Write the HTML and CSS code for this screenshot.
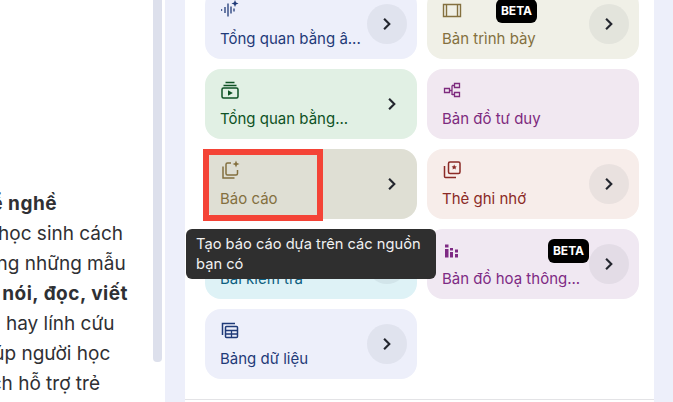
FILE: index.html
```html
<!DOCTYPE html>
<html lang="vi">
<head>
<meta charset="utf-8">
<title>Studio</title>
<link rel="stylesheet" href="styles.css">
</head>
<body>
<div class="page">
  <section class="source">
    <div class="prose">
      <p class="line l1">để <b>nghề</b></p>
      <p class="line l2">dạy học sinh cách</p>
      <p class="line l3">trong những mẫu</p>
      <p class="line l4"><b>nghe, nói, đọc, viết</b></p>
      <p class="line l5">viên hay lính cứu</p>
      <p class="line l6">giúp người học</p>
      <p class="line l7">cách hỗ trợ trẻ</p>
    </div>
    <div class="scrollbar"></div>
  </section>
  <main class="studio">
    <div class="grid">
      <div class="card indigo">
        <div class="info">
          <svg class="icon" viewBox="0 0 20 20"><path d="M1 10h1.200M5 7v6M8 3.500v13M11 6.500v7M14 8.500v3" fill="none" stroke="currentColor" stroke-width="1.300"/><path d="M15 0l1 2.500L18.500 3.500 16 4.500 15 7l-1-2.500L11.500 3.500 14 2.500z" fill="currentColor"/></svg>
          <span class="label">Tổng quan bằng â...</span>
        </div>
        <button class="go"><svg viewBox="0 0 12 12"><path d="M3.500 1.500 8 6l-4.500 4.500" /></svg></button>
      </div>
      <div class="card sand">
        <div class="info">
          <svg class="icon" viewBox="0 0 20 20"><path d="M1.500 4.500h17v12h-17zM4.500 4.500v12M15.500 4.500v12" fill="none" stroke="currentColor" stroke-width="1.400"/></svg>
          <span class="label">Bản trình bày</span>
        </div>
        <button class="go"><svg viewBox="0 0 12 12"><path d="M3.500 1.500 8 6l-4.500 4.500" /></svg></button>
        <span class="beta beta-top">BETA</span>
      </div>
      <div class="card green">
        <div class="info">
          <svg class="icon" viewBox="0 0 20 20"><path d="M5.500 2.500h9M3.500 5.500h13" fill="none" stroke="currentColor" stroke-width="1.400"/><rect x="2" y="8" width="16" height="10" rx="1.500" fill="none" stroke="currentColor" stroke-width="1.500"/><path d="M8 10.200v5.600l4.800-2.800z" fill="currentColor"/></svg>
          <span class="label">Tổng quan bằng...</span>
        </div>
        <button class="go plain"><svg viewBox="0 0 12 12"><path d="M3.500 1.500 8 6l-4.500 4.500" /></svg></button>
      </div>
      <div class="card plum">
        <div class="info">
          <svg class="icon" viewBox="0 0 20 20"><path d="M2.500 8.500h5v4h-5zM12.500 3.500h5v4h-5zM12.500 12.500h5v4h-5zM7.500 10.500h2.500M10 5.500v9.500M10 5.500h2.500M10 14.500h2.500" fill="none" stroke="currentColor" stroke-width="1.300"/></svg>
          <span class="label">Bản đồ tư duy</span>
        </div>
      </div>
      <div class="card report">
        <div class="info">
          <svg class="icon" viewBox="0 0 20 20"><path d="M3 6.500v11.500h11.500" fill="none" stroke="currentColor" stroke-width="1.500"/><path d="M11 3H7.500C6.700 3 6 3.700 6 4.500V13.500C6 14.300 6.700 15 7.500 15H16C16.800 15 17.500 14.300 17.500 13.500V10" fill="none" stroke="currentColor" stroke-width="1.500"/><path d="M16 .5l1 2.500 2.500 1-2.500 1-1 2.500-1-2.500-2.500-1 2.500-1z" fill="currentColor"/></svg>
          <span class="label">Báo cáo</span>
        </div>
        <button class="go plain"><svg viewBox="0 0 12 12"><path d="M3.500 1.500 8 6l-4.500 4.500" /></svg></button>
        <span class="highlight"></span>
      </div>
      <div class="card rose">
        <div class="info">
          <svg class="icon" viewBox="0 0 20 20"><rect x="6.500" y="2" width="11.500" height="11.500" rx="1.500" fill="none" stroke="currentColor" stroke-width="1.500"/><path d="M2.500 6v10.500c0 .6.400 1 1 1H14" fill="none" stroke="currentColor" stroke-width="1.500"/><path d="M12.200 4.500l.8 1.700 1.800.3-1.300 1.200.3 1.800-1.600-.9-1.600.9.300-1.800-1.300-1.200 1.800-.3z" fill="currentColor"/></svg>
          <span class="label">Thẻ ghi nhớ</span>
        </div>
        <button class="go"><svg viewBox="0 0 12 12"><path d="M3.500 1.500 8 6l-4.500 4.500" /></svg></button>
      </div>
      <div class="card cyan">
        <div class="info">
          <svg class="icon" viewBox="0 0 20 20"><circle cx="10" cy="10" r="7" fill="none" stroke="currentColor" stroke-width="1.500"/></svg>
          <span class="label">Bài kiểm tra</span>
        </div>
        <button class="go"><svg viewBox="0 0 12 12"><path d="M3.500 1.500 8 6l-4.500 4.500" /></svg></button>
      </div>
      <div class="card violet">
        <div class="info">
          <svg class="icon" viewBox="0 0 20 20"><path d="M3 4.500h3.500v3H3zM3 9h3.500v8.500H3zM8 8h3v2.500H8zM8 12h3v5.500H8zM13 9.500h3v3h-3zM13 14h3v3.500h-3z" fill="currentColor"/></svg>
          <span class="label">Bản đồ hoạ thông...</span>
        </div>
        <button class="go"><svg viewBox="0 0 12 12"><path d="M3.500 1.500 8 6l-4.500 4.500" /></svg></button>
        <span class="beta beta-info">BETA</span>
      </div>
      <div class="card indigo">
        <div class="info">
          <svg class="icon" viewBox="0 0 20 20"><path d="M2.500 15V3.500H15" fill="none" stroke="currentColor" stroke-width="1.500"/><rect x="5.500" y="6.500" width="12" height="11" rx="1" fill="none" stroke="currentColor" stroke-width="1.500"/><path d="M5.500 10.500h12M5.500 14h12M11.500 10.500v7" fill="none" stroke="currentColor" stroke-width="1.300"/></svg>
          <span class="label">Bảng dữ liệu</span>
        </div>
        <button class="go"><svg viewBox="0 0 12 12"><path d="M3.500 1.500 8 6l-4.500 4.500" /></svg></button>
      </div>
    </div>
    <hr class="rule">
  </main>
</div>
<div class="tooltip">Tạo báo cáo dựa trên các nguồn bạn có</div>
</body>
</html>
```
FILE: styles.css
```css
* { box-sizing: border-box; }
html, body { margin: 0; height: 100%; overflow: hidden; background: #edeffa; }
body { position: relative; font-family: Inter, "Noto Sans", sans-serif; }
.page { display: flex; height: 402px; width: 673px; }
.source { width: 165px; flex: none; background: #fff; display: flex; overflow: hidden; }
.prose { width: 153px; flex: none; padding-top: 189px; overflow: hidden; font-size: 19px; line-height: 30px; color: #2f3034; }
.line { margin: 0; white-space: nowrap; }
.line b { font-weight: 700; letter-spacing: .5px; }
.l1 { margin-left: -20px; }
.l2 { margin-left: -40px; }
.l3 { margin-left: -28px; }
.l4 { margin-left: -58px; }
.l5 { margin-left: -37px; }
.l6 { margin-left: -23px; }
.l7 { margin-left: -31px; }
.scrollbar { width: 9px; height: 362px; background: #dde0ec; border-radius: 0 0 4px 4px; }
.studio { width: 469px; margin-left: 20px; flex: none; background: #fff; padding: 0 15px 0 20px; overflow: hidden; }
.grid { display: grid; grid-template-columns: 212px 212px; grid-auto-rows: 70px; column-gap: 10px; row-gap: 10px; margin-top: -11px; }
.card { position: relative; border-radius: 16px; display: flex; align-items: center; justify-content: space-between; padding: 0 10px 0 15px; }
.info { display: flex; flex-direction: column; gap: 9px; align-items: flex-start; }
.icon { width: 20px; height: 20px; display: block; }
.label { font-size: 15px; line-height: 20px; white-space: nowrap; }
.go { width: 40px; height: 40px; border-radius: 50%; border: 0; padding: 0; background: rgba(60, 64, 90, .07); display: flex; align-items: center; justify-content: center; }
.go.plain { background: transparent; }
.go.plain svg { margin-left: 9px; }
.go svg { width: 14px; height: 14px; fill: none; stroke: #23262e; stroke-width: 1.800; }
.indigo { background: #edeffa; color: #1f3a78; }
.sand { background: #f0f0e7; color: #84703f; }
.green { background: #e1f0e4; color: #0e5224; }
.plum { background: #f1e8f1; color: #7e2a7e; }
.report { background: #dfdfd4; color: #84703f; }
.rose { background: #f7edea; color: #8b2a26; }
.cyan { background: #def2f6; color: #0d5f80; }
.violet { background: #f0e8f2; color: #7e2a84; }
.beta { position: absolute; background: #000; color: #fff; font-size: 12px; font-weight: 700; line-height: 24px; height: 24px; width: 41px; text-align: center; border-radius: 6px; }
.beta-top { left: 69px; top: 10px; }
.beta-info { left: 121px; top: 10px; }
.highlight { position: absolute; left: -2px; top: 0; width: 120px; height: 72px; border: 6px solid #f44336; }
.rule { border: 0; border-top: 1px solid #e3e3e6; margin: 20px -15px 0 -20px; }
.tooltip { position: absolute; left: 186px; top: 229px; width: 250px; height: 50px; background: #2f2f2f; color: #f1f1f1; border-radius: 6px; padding: 5px 10px; font-size: 14.700px; line-height: 20px; }
```
